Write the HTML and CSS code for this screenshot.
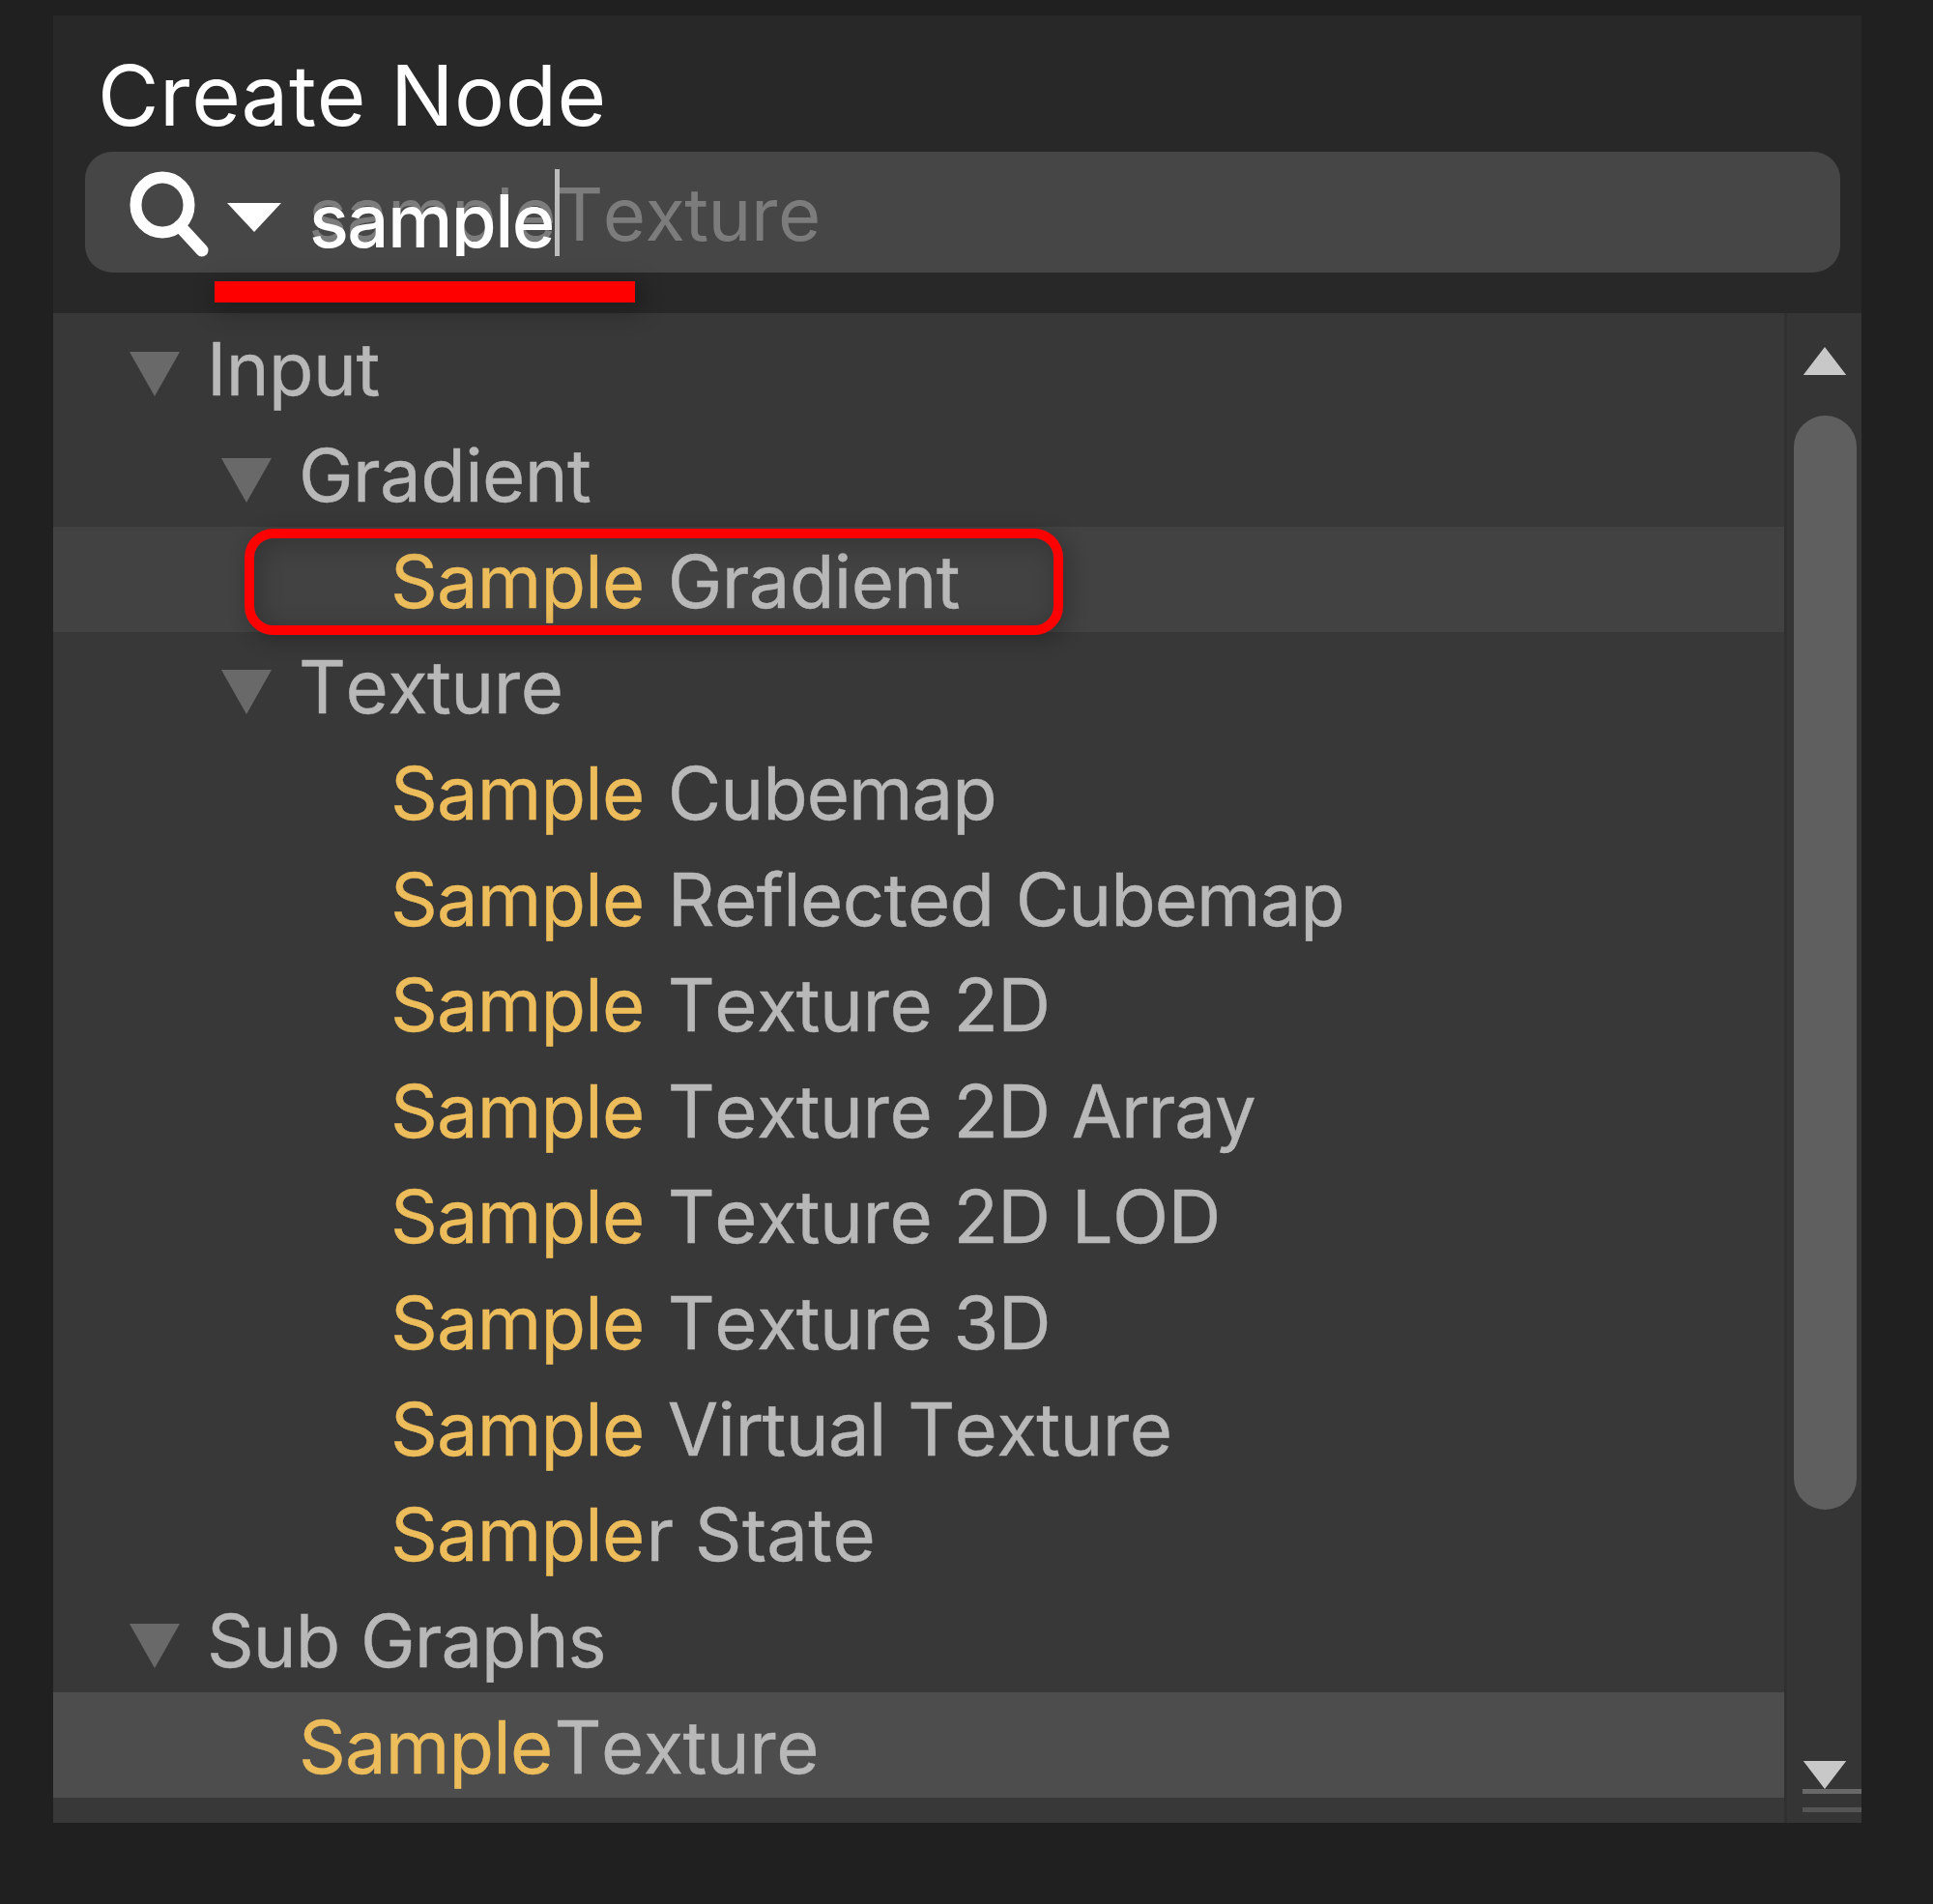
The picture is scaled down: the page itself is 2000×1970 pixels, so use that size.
FILE: index.html
```html
<!DOCTYPE html>
<html lang="en">
<head>
<meta charset="utf-8">
<title>Create Node</title>
<link rel="stylesheet" href="styles.css">
</head>
<body>
<main class="panel">
  <header class="head">
    <h1 class="title">Create Node</h1>
    <div class="search">
      <svg class="glass" viewBox="0 0 84 90"><ellipse cx="35" cy="36" rx="27.5" ry="28.5" fill="none" stroke="#fff" stroke-width="12"/><path d="M53 58L76 83" stroke="#fff" stroke-width="13" stroke-linecap="round"/></svg>
      <svg class="caret-down" viewBox="0 0 56 30"><path d="M0 0H56L28 30Z" fill="#fff"/></svg>
      <div class="field">
        <span class="ghost"><span class="prefix">sample</span>Texture</span>
        <span class="typed">sample</span>
        <span class="cursor"></span>
      </div>
      <span class="underline"></span>
    </div>
  </header>
  <div class="body">
    <ul class="tree">
      <li class="row l1"><svg class="tri" viewBox="0 0 52 46"><path d="M0 0H52L26 46Z"/></svg><span class="label">Input</span></li>
      <li class="row l2"><svg class="tri" viewBox="0 0 52 46"><path d="M0 0H52L26 46Z"/></svg><span class="label">Gradient</span></li>
      <li class="row l3 hover"><span class="label"><b>Sample</b> Gradient</span><span class="mark"></span></li>
      <li class="row l2"><svg class="tri" viewBox="0 0 52 46"><path d="M0 0H52L26 46Z"/></svg><span class="label">Texture</span></li>
      <li class="row l3"><span class="label"><b>Sample</b> <span class="tight">Cubemap</span></span></li>
      <li class="row l3"><span class="label"><b>Sample</b> Reflected <span class="tight">Cubemap</span></span></li>
      <li class="row l3"><span class="label"><b>Sample</b> Texture 2D</span></li>
      <li class="row l3"><span class="label"><b>Sample</b> Texture 2D <span class="tight">Array</span></span></li>
      <li class="row l3"><span class="label"><b>Sample</b> Texture 2D LOD</span></li>
      <li class="row l3"><span class="label"><b>Sample</b> Texture 3D</span></li>
      <li class="row l3"><span class="label"><b>Sample</b> Virtual Texture</span></li>
      <li class="row l3"><span class="label"><b>Sample</b>r <span class="wide">State</span></span></li>
      <li class="row l1"><svg class="tri" viewBox="0 0 52 46"><path d="M0 0H52L26 46Z"/></svg><span class="label tight">Sub Graphs</span></li>
      <li class="row l2 selected"><span class="label"><b>Sample</b>Texture</span></li>
    </ul>
    <div class="scrollbar">
      <svg class="arrow" viewBox="0 0 46 30"><path d="M0 30H46L23 0Z"/></svg>
      <div class="thumb"></div>
      <div class="foot">
        <svg class="arrow" viewBox="0 0 46 30"><path d="M0 0H46L23 30Z"/></svg>
        <span class="grip"></span>
        <span class="grip dim"></span>
      </div>
    </div>
  </div>
</main>
</body>
</html>
```

FILE: styles.css
```css
* { box-sizing: border-box; }
body {
  margin: 0;
  width: 2000px;
  height: 1970px;
  padding: 16px 74px 84px 55px;
  background: #202020;
  font-family: Inter, "Liberation Sans", sans-serif;
  font-size: 76px;
  font-kerning: none;
  letter-spacing: -0.6px;
  color: #b8b8b8;
  overflow: hidden;
}
svg { display: block; flex: none; }
.panel { height: 1870px; display: flex; flex-direction: column; background: #282828; }
.head { height: 308px; padding: 32px 22px 0 33px; }
.title {
  margin: 0 0 0 13px;
  height: 109px;
  line-height: 101px;
  font-size: 87px;
  font-weight: 400;
  letter-spacing: 0.5px;
  color: #fff;
  white-space: nowrap;
}
.search {
  position: relative;
  height: 125px;
  padding-left: 45px;
  display: flex;
  align-items: flex-start;
  border-radius: 28px;
  background: #464646;
}
.glass { width: 84px; height: 90px; margin-top: 19px; }
.caret-down { width: 56px; height: 30px; margin: 53px 0 0 18px; }
.field {
  position: relative;
  width: 700px;
  height: 90px;
  margin: 18px 0 0 28px;
  overflow: hidden;
  white-space: nowrap;
  line-height: 92px;
}
.ghost { position: absolute; left: 0; top: 0; color: #7c7c7c; }
.prefix { letter-spacing: -0.4px; }
.typed { position: absolute; left: 1px; top: 7px; color: #fff; font-weight: 500; letter-spacing: -1.6px; }
.cursor { position: absolute; left: 255px; top: 0; width: 5px; height: 90px; background: #bcbcbc; }
.underline {
  position: absolute;
  left: 134px;
  top: 134px;
  width: 435px;
  height: 22px;
  background: #f00;
  box-shadow: 4px 6px 22px 4px rgba(0, 0, 0, 0.25);
  z-index: 2;
}
.body { flex: 1; display: flex; }
.tree {
  width: 1791px;
  margin: 0;
  padding: 1.3px 0 0;
  list-style: none;
  background: #383838;
}
.row { position: relative; height: 109.65px; display: flex; align-items: flex-start; }
.label {
  line-height: 113px;
  white-space: nowrap;
  word-spacing: 1.5px;
  -webkit-text-stroke: 0.4px currentColor;
}
.label b { margin-right: 2px; font-weight: 400; letter-spacing: -0.8px; color: #edbd5b; }
.tight { letter-spacing: -1px; }
.wide { letter-spacing: 0.4px; }
.l1 { padding-left: 79px; }
.l2 { padding-left: 174px; }
.l3 { padding-left: 349px; }
.selected { padding-left: 254px; background: #4d4d4d; }
.hover { background: #424242; }
.tri { width: 52px; height: 46px; margin: 39px 28px 0 0; fill: #696969; }
.mark {
  position: absolute;
  left: 198px;
  top: 2px;
  width: 847px;
  height: 110px;
  border: 10px solid #f00;
  border-radius: 30px;
  box-shadow: 5px 5px 20px 2px rgba(0, 0, 0, 0.22), inset 5px 5px 24px 2px rgba(0, 0, 0, 0.2);
  z-index: 1;
}
.scrollbar {
  width: 80px;
  display: flex;
  flex-direction: column;
  padding: 35px 0 0 7px;
  border-left: 3px solid #303030;
  background: #353535;
}
.arrow { width: 46px; height: 29px; margin-left: 9px; fill: #c8c8c8; }
.thumb { width: 65px; height: 1132px; margin-top: 42px; border-radius: 33px; background: #5f5f5f; }
.foot { margin-top: auto; height: 64px; }
.grip { display: block; height: 5px; margin: 0 0 0 9px; background: #686868; }
.dim { margin-top: 14px; background: #555; }
```
